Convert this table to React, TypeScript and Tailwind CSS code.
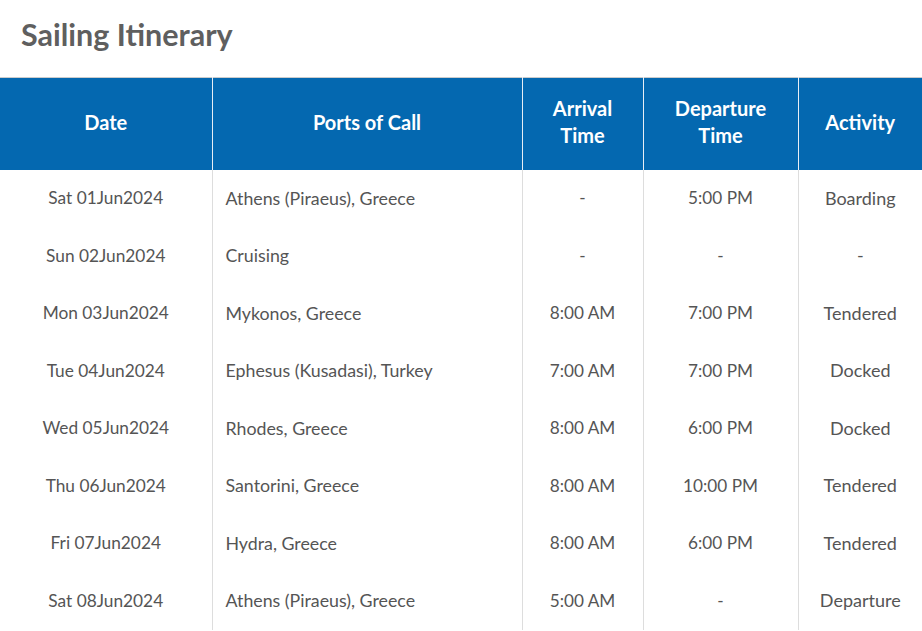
import React from 'react';

type Stop = {
    date: string;
    port: string;
    arrival: string;
    departure: string;
    activity: string;
};

const stops: Stop[] = [
    { date: 'Sat 01Jun2024', port: 'Athens (Piraeus), Greece', arrival: '-', departure: '5:00 PM', activity: 'Boarding' },
    { date: 'Sun 02Jun2024', port: 'Cruising', arrival: '-', departure: '-', activity: '-' },
    { date: 'Mon 03Jun2024', port: 'Mykonos, Greece', arrival: '8:00 AM', departure: '7:00 PM', activity: 'Tendered' },
    { date: 'Tue 04Jun2024', port: 'Ephesus (Kusadasi), Turkey', arrival: '7:00 AM', departure: '7:00 PM', activity: 'Docked' },
    { date: 'Wed 05Jun2024', port: 'Rhodes, Greece', arrival: '8:00 AM', departure: '6:00 PM', activity: 'Docked' },
    { date: 'Thu 06Jun2024', port: 'Santorini, Greece', arrival: '8:00 AM', departure: '10:00 PM', activity: 'Tendered' },
    { date: 'Fri 07Jun2024', port: 'Hydra, Greece', arrival: '8:00 AM', departure: '6:00 PM', activity: 'Tendered' },
    { date: 'Sat 08Jun2024', port: 'Athens (Piraeus), Greece', arrival: '5:00 AM', departure: '-', activity: 'Departure' },
];

const App: React.FC = () => {
    return (
        <div className="min-h-screen bg-white font-['Lato',sans-serif]">
            <h2 className="h-[77px] pl-[21px] pt-[14px] text-[30.5px] font-bold leading-[40px] text-[#5f5f5f]">
                Sailing Itinerary
            </h2>

            <table className="w-[922px] table-fixed border-collapse border-t border-[#cccccc]">
                <colgroup>
                    <col className="w-[212px]" />
                    <col className="w-[310px]" />
                    <col className="w-[121px]" />
                    <col className="w-[155px]" />
                    <col className="w-[124px]" />
                </colgroup>
                <thead>
                    <tr className="h-[92px] bg-[#0468b0] text-[20px] font-bold leading-[27px] text-white">
                        <th className="px-2 pb-[3px]">Date</th>
                        <th className="border-l border-[#e8eef5] px-2 pb-[3px]">Ports of Call</th>
                        <th className="border-l border-[#e8eef5] px-2 pb-[3px]">Arrival<br />Time</th>
                        <th className="border-l border-[#e8eef5] px-2 pb-[3px]">Departure<br />Time</th>
                        <th className="border-l border-[#e8eef5] px-2 pb-[3px]">Activity</th>
                    </tr>
                </thead>
                <tbody className="text-[#555555]">
                    {stops.map((s, i) => (
                        <tr key={i} className="h-[57.5px]">
                            <td className="text-center text-[17.3px]">{s.date}</td>
                            <td className="border-l border-[#dddddd] pl-[13px] text-[17.8px]">{s.port}</td>
                            <td className="border-l border-[#dddddd] text-center text-[17.2px]">{s.arrival}</td>
                            <td className="border-l border-[#dddddd] text-center text-[17.2px]">{s.departure}</td>
                            <td className="border-l border-[#dddddd] text-center text-[18px]">{s.activity}</td>
                        </tr>
                    ))}
                </tbody>
            </table>
        </div>
    );
};

export default App;
